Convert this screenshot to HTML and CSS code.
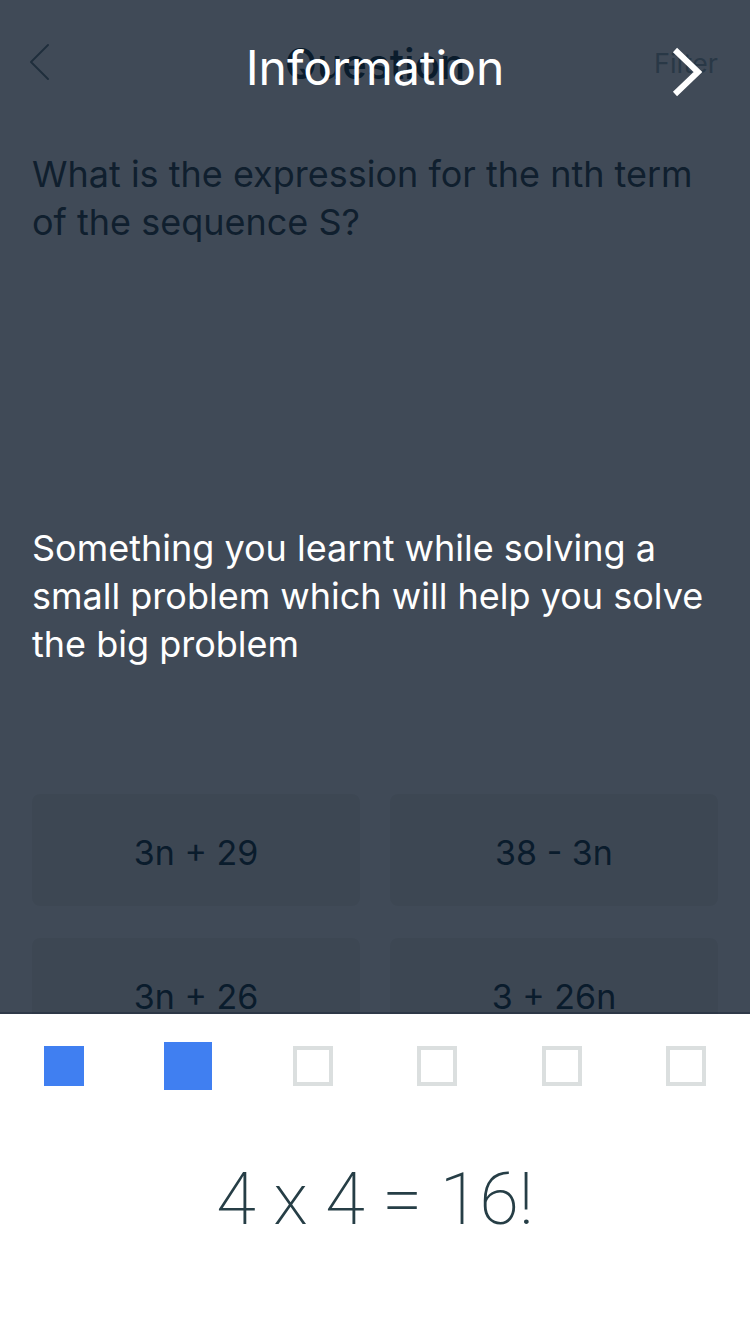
FILE: index.html
```html
<!DOCTYPE html>
<html lang="en">
<head>
<meta charset="utf-8">
<meta name="viewport" content="width=device-width, initial-scale=1">
<title>Information</title>
<link rel="stylesheet" href="styles.css">
</head>
<body>
<div class="screen">
  <main class="question-page">
    <header class="bar">
      <button class="back" type="button" aria-label="Back">
        <svg width="22" height="44" viewBox="0 0 22 44" fill="none" stroke="currentColor" stroke-width="2" stroke-linecap="round" stroke-linejoin="round"><path d="M20 3 3 20 20 37"/></svg>
      </button>
      <h1 class="bar-title">Question</h1>
      <button class="filter" type="button">Filter</button>
    </header>
    <p class="prompt">What is the expression for the nth term of the sequence S?</p>
    <div class="options">
      <button class="option" type="button">3n + 29</button>
      <button class="option" type="button">38 - 3n</button>
      <button class="option" type="button">3n + 26</button>
      <button class="option" type="button">3 + 26n</button>
    </div>
  </main>
  <section class="overlay" role="dialog" aria-labelledby="info-title">
    <header class="overlay-bar">
      <h2 class="overlay-title" id="info-title">Information</h2>
      <button class="next" type="button" aria-label="Next">
        <svg width="32" height="44" viewBox="0 0 32 44" overflow="visible" fill="none" stroke="currentColor" stroke-width="6"><path d="M3 4 26 26 3 48"/></svg>
      </button>
    </header>
    <div class="message">
      <p class="message-text">Something you learnt while solving a small problem which will help you solve the big problem</p>
    </div>
    <footer class="sheet">
      <nav class="steps" aria-label="Steps">
        <button class="step step-done" type="button" aria-label="Step 1"></button>
        <button class="step step-current" type="button" aria-label="Step 2" aria-current="step"></button>
        <button class="step" type="button" aria-label="Step 3"></button>
        <button class="step" type="button" aria-label="Step 4"></button>
        <button class="step" type="button" aria-label="Step 5"></button>
        <button class="step" type="button" aria-label="Step 6"></button>
      </nav>
      <p class="result">4 x 4 = 16!</p>
    </footer>
  </section>
</div>
</body>
</html>
```
FILE: styles.css
```css
* {
  box-sizing: border-box;
}

body,
h1,
h2,
p {
  margin: 0;
  font-weight: 400;
}

body {
  font-family: Inter, "Liberation Sans", sans-serif;
  font-size: 36px;
  line-height: 48px;
  background: #fff;
}

button {
  padding: 0;
  border: 0;
  background: none;
  color: inherit;
  font: inherit;
}

svg {
  display: block;
}

.screen {
  position: relative;
  height: 100vh;
  overflow: hidden;
}

.question-page {
  padding: 0 32px;
  color: #263e46;
}

.bar,
.overlay-bar {
  display: grid;
  grid-template-columns: 1fr auto 1fr;
  align-items: center;
  height: 128px;
}

.back {
  justify-self: start;
  margin-left: -4px;
  color: #6a7e86;
}

.bar-title {
  color: #0a2d3b;
  font-size: 42px;
  font-weight: 500;
}

.filter {
  justify-self: end;
  color: #96adb1;
  font-size: 27px;
}

.prompt {
  min-height: 644px;
  padding-top: 22px;
}

.options {
  display: grid;
  grid-template-columns: 1fr 1fr;
  gap: 32px 30px;
  padding-top: 22px;
}

.option {
  height: 112px;
  padding-top: 6px;
  border-radius: 8px;
  background: #f0f0ee;
  color: #0a2d3b;
  font-size: 34px;
}

.overlay {
  position: absolute;
  inset: 0;
  display: flex;
  flex-direction: column;
  background: rgba(10, 23, 40, 0.78);
  color: #fff;
}

.overlay-bar {
  height: 136px;
  padding: 0 46px;
}

.overlay-title {
  grid-column: 2;
  font-size: 48px;
}

.next {
  justify-self: end;
}

.message {
  display: flex;
  flex: 1;
  align-items: center;
  padding: 42px 32px 0;
}

.sheet {
  min-height: 320px;
  padding: 28px 40px;
  background: #fff;
  box-shadow: 0 -2px 0 rgba(11, 20, 40, 0.3);
  color: #263e46;
}

.steps {
  display: flex;
  align-items: center;
  justify-content: space-between;
}

.step {
  width: 40px;
  height: 40px;
  margin: 4px;
  border: 4px solid #dbdfdf;
}

.step-done,
.step-current {
  border: 0;
  background: #407ff1;
}

.step-current {
  width: 48px;
  height: 48px;
  margin: 0;
}

.result {
  padding-top: 66px;
  font-family: Roboto, "Liberation Sans", sans-serif;
  font-size: 72px;
  font-weight: 200;
  line-height: 88px;
  text-align: center;
}
```
